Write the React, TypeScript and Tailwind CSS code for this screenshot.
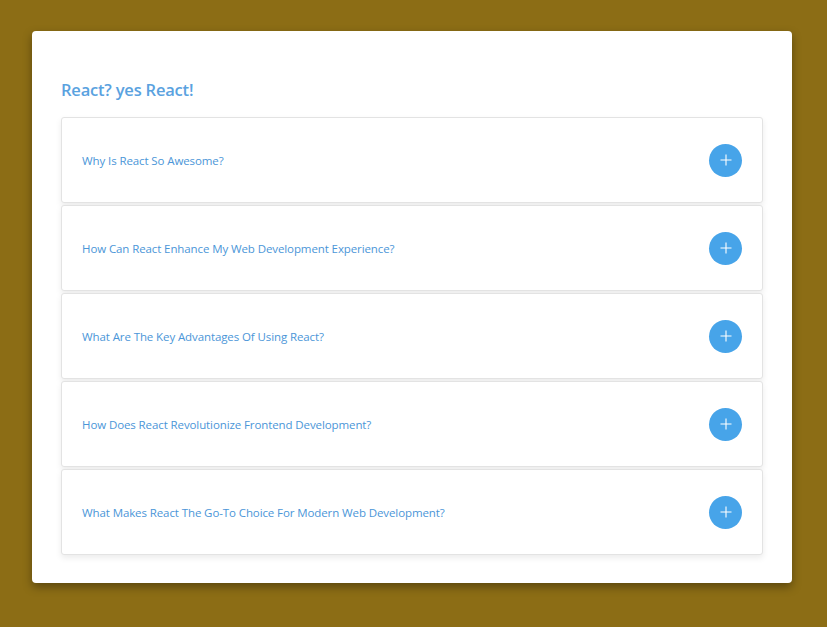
import React from "react";

const items = [
  "Why Is React So Awesome?",
  "How Can React Enhance My Web Development Experience?",
  "What Are The Key Advantages Of Using React?",
  "How Does React Revolutionize Frontend Development?",
  "What Makes React The Go-To Choice For Modern Web Development?",
];

export default function App() {
  return (
    <div
      className="min-h-[627px] w-full bg-[#8c6d15] pt-[31px] pl-[32px]"
      style={{ fontFamily: '"Open Sans", "Noto Sans", sans-serif' }}
    >
      <div className="w-[760px] h-[552px] bg-white rounded-[4px] shadow-[0_4px_10px_rgba(0,0,0,0.35)] px-[29px] pt-[47px]">
        <h1 className="text-[16.5px] leading-[24px] font-semibold text-[#5aa2df] tracking-[-0.2px]">
          React? yes React!
        </h1>
        <div className="mt-[15px] flex flex-col gap-[2px]">
          {items.map((t) => (
            <div
              key={t}
              className="h-[86px] flex items-center justify-between border border-[#e3e3e3] rounded-[3px] bg-white shadow-[0_3px_6px_rgba(0,0,0,0.08)] pl-[20px] pr-[20px]"
            >
              <span className="text-[11.5px] pt-[2px] text-[#4b96d8] tracking-[-0.1px]">{t}</span>
              <button className="w-[33px] h-[33px] rounded-full bg-[#47a4e9] flex items-center justify-center">
                <svg width="12" height="12" viewBox="0 0 12 12">
                  <path d="M6 0.5V11.5M0.5 6H11.5" stroke="white" strokeWidth="1.1" />
                </svg>
              </button>
            </div>
          ))}
        </div>
      </div>
    </div>
  );
}
